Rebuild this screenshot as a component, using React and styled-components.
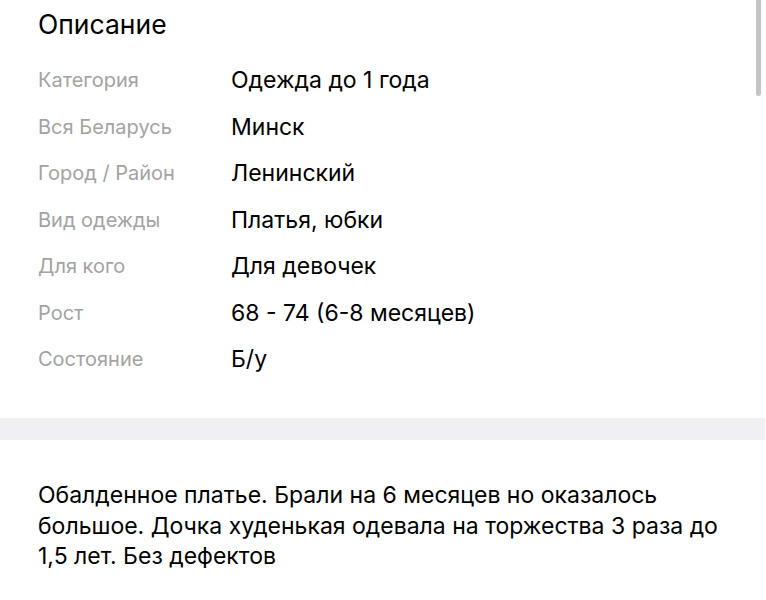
import React from "react";
import styled, { createGlobalStyle } from "styled-components";

const GlobalStyle = createGlobalStyle`
  html, body {
    margin: 0;
    padding: 0;
    background: #fff;
    font-family: Inter, "Noto Sans", sans-serif;
    -webkit-font-smoothing: antialiased;
  }
`;

const rows = [
  ["Категория", "Одежда до 1 года"],
  ["Вся Беларусь", "Минск"],
  ["Город / Район", "Ленинский"],
  ["Вид одежды", "Платья, юбки"],
  ["Для кого", "Для девочек"],
  ["Рост", "68 - 74 (6-8 месяцев)"],
  ["Состояние", "Б/у"],
];

const App = () => {
  return (
    <Page>
      <GlobalStyle />
      <Section>
        <Title>Описание</Title>
        <Params>
          {rows.map(([label, value]) => (
            <Row key={label}>
              <Label>{label}</Label>
              <Value>{value}</Value>
            </Row>
          ))}
        </Params>
      </Section>
      <Divider />
      <Text>
        Обалденное платье. Брали на 6 месяцев но оказалось большое. Дочка
        худенькая одевала на торжества 3 раза до 1,5 лет. Без дефектов
      </Text>
      <Scrollbar />
    </Page>
  );
};
export default App;

const Page = styled.div`
  position: relative;
  width: 766px;
  height: 600px;
  overflow: hidden;
  background: #fff;
`;

const Section = styled.div`
  padding: 8px 0 0 38px;
  height: 410px;
`;

const Title = styled.h2`
  margin: 0;
  font-size: 26.5px;
  line-height: 32px;
  font-weight: 400;
  color: #000;
`;

const Params = styled.div`
  display: flex;
  flex-direction: column;
  margin-top: 17px;
`;

const Row = styled.div`
  display: grid;
  grid-template-columns: 193px 1fr;
  align-items: center;
  height: 46.5px;
`;

const Label = styled.span`
  font-size: 20px;
  color: #a3a3a3;
`;

const Value = styled.span`
  font-size: 23px;
  color: #000;
`;

const Divider = styled.div`
  height: 22px;
  background: #efeff4;
  margin-right: 1px;
`;

const Text = styled.p`
  margin: 40px 0 0 38px;
  width: 700px;
  font-size: 23px;
  line-height: 30.5px;
  color: #000;
`;

const Scrollbar = styled.div`
  position: absolute;
  top: 0;
  right: 5px;
  width: 5px;
  height: 96px;
  border-radius: 0 0 3px 3px;
  background: #c4c4c4;
`;
